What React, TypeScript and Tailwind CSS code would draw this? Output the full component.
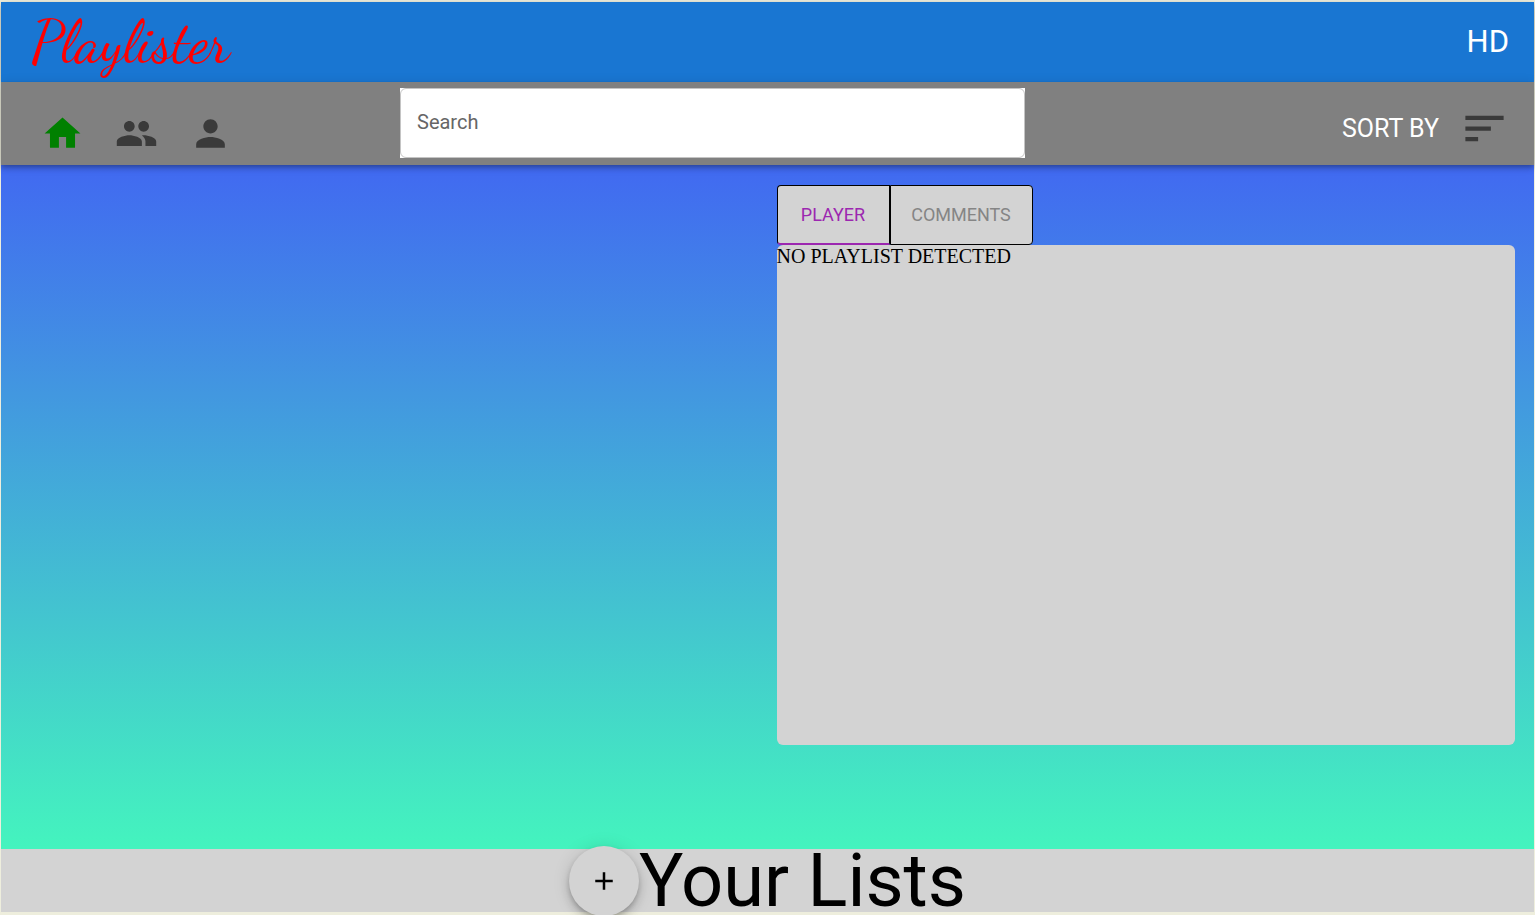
import { useState } from "react";

function Icon({ d, className }: { d: string; className: string }) {
  return (
    <svg viewBox="0 0 24 24" fill="currentColor" aria-hidden="true" className={className}>
      <path d={d} />
    </svg>
  );
}

const HOME = "M10 20v-6h4v6h5v-8h3L12 3 2 12h3v8z";
const PEOPLE =
  "M16 11c1.66 0 2.99-1.34 2.99-3S17.66 5 16 5c-1.66 0-3 1.34-3 3s1.34 3 3 3zm-8 0c1.66 0 2.99-1.34 2.99-3S9.66 5 8 5C6.34 5 5 6.34 5 8s1.34 3 3 3zm0 2c-2.33 0-7 1.17-7 3.5V19h14v-2.500c0-2.330-4.670-3.500-7-3.500zm8 0c-.29 0-.62.020-.97.050 1.160.840 1.970 1.970 1.970 3.450V19h6v-2.500c0-2.330-4.670-3.500-7-3.500z";
const PERSON =
  "M12 12c2.210 0 4-1.790 4-4s-1.790-4-4-4-4 1.790-4 4 1.790 4 4 4zm0 2c-2.670 0-8 1.340-8 4v2h16v-2c0-2.660-5.330-4-8-4z";
const SORT = "M3 18h6v-2H3v2zM3 6v2h18V6H3zm0 7h12v-2H3v2z";
const ADD = "M19 13h-6v6h-2v-6H5v-2h6V5h2v6h6v2z";

const views = [
  { label: "Home", d: HOME, color: "text-[#008000]" },
  { label: "All lists", d: PEOPLE, color: "text-[#3a3a3a]" },
  { label: "Users", d: PERSON, color: "text-[#3a3a3a]" },
];

const tabBase = "flex h-15 items-center justify-center border border-black bg-[#d3d3d3] text-lg";

export default function App() {
  const [tab, setTab] = useState("player");
  return (
    <div className="flex min-h-screen flex-col bg-[#eeeedd] px-px pt-0.5 pb-[3px] font-['Roboto',sans-serif] text-black">
      <header className="flex h-20 items-center justify-between bg-[#1976d2] pr-[25px] pl-[30px] shadow-[0_2px_4px_-1px_rgba(0,0,0,0.2),0_4px_5px_rgba(0,0,0,0.14),0_1px_10px_rgba(0,0,0,0.12)]">
        <a href="#" className="font-['Dancing_Script','Liberation_Serif',cursive] text-[59px] leading-none text-[#ff0000]">
          Playlister
        </a>
        <button type="button" aria-label="Account" className="text-[31px] text-white">
          HD
        </button>
      </header>

      <nav className="relative grid h-[83px] grid-cols-[399fr_625fr_509fr] items-center bg-[#808080] shadow-[0_2px_4px_-1px_rgba(0,0,0,0.2),0_4px_5px_rgba(0,0,0,0.14),0_1px_10px_rgba(0,0,0,0.12)]">
        <div className="flex gap-[31px] pt-5 pl-10">
          {views.map((v) => (
            <button key={v.label} type="button" aria-label={v.label} className={v.color}>
              <Icon d={v.d} className="size-[43px]" />
            </button>
          ))}
        </div>
        <div className="mb-0.5 bg-white">
          <input
            type="text"
            aria-label="Search"
            placeholder="Search"
            className="block h-[70px] w-full rounded-md border border-[#c4c4c4] px-4 pb-0.5 text-xl text-black placeholder:text-[#666666]"
          />
        </div>
        <div className="flex items-center justify-end gap-5 pt-2.5 pr-6">
          <span className="text-[25px] text-white">SORT BY</span>
          <button type="button" aria-label="Sort by" className="text-[#3a3a3a]">
            <Icon d={SORT} className="size-[51px]" />
          </button>
        </div>
      </nav>

      <main className="grid flex-1 grid-cols-2 bg-linear-to-b/srgb from-[#4169f1] to-[#44f4be]">
        <section aria-label="Playlists" />
        <section className="pt-5 pr-[19px] pb-5 pl-[9px]">
          <div role="tablist" className="flex">
            <button
              type="button"
              role="tab"
              aria-selected={tab === "player"}
              onClick={() => setTab("player")}
              className={`${tabBase} w-[113px] rounded-l ${tab === "player" ? "border-b-2 border-b-[#9c27b0] text-[#9c27b0]" : "text-[#858585]"}`}
            >
              PLAYER
            </button>
            <button
              type="button"
              role="tab"
              aria-selected={tab === "comments"}
              onClick={() => setTab("comments")}
              className={`${tabBase} w-[143px] rounded-r ${tab === "comments" ? "border-b-2 border-b-[#9c27b0] text-[#9c27b0]" : "text-[#858585]"}`}
            >
              COMMENTS
            </button>
          </div>
          <div role="tabpanel" className="h-[500px] rounded-md bg-[#d3d3d3] font-['Liberation_Serif',serif] text-xl leading-[22px]">
            {tab === "player" ? "NO PLAYLIST DETECTED" : ""}
          </div>
        </section>
      </main>

      <footer className="flex h-[63px] items-center justify-center bg-[#d3d3d3]">
        <button
          type="button"
          aria-label="Add list"
          className="flex size-[70px] items-center justify-center rounded-full bg-[#d3d3d3] shadow-[0_3px_5px_-1px_rgba(0,0,0,0.2),0_6px_10px_rgba(0,0,0,0.14),0_1px_18px_rgba(0,0,0,0.12)]"
        >
          <Icon d={ADD} className="size-[30px]" />
        </button>
        <h1 className="text-[74px] leading-[64px]">Your Lists</h1>
      </footer>
    </div>
  );
}
